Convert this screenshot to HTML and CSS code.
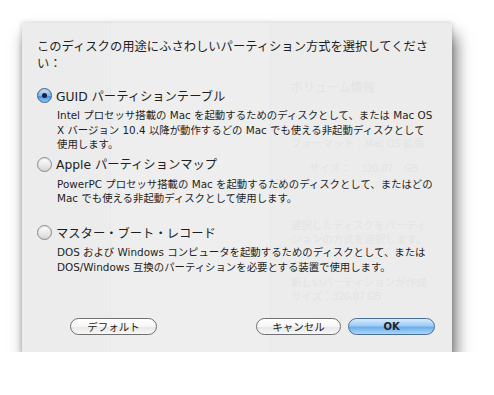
FILE: index.html
```html
<!DOCTYPE html>
<html>

<head>
  <meta name="viewport" content="width=device-width, initial-scale=1">
  <title>パーティション方式</title>
  <link rel="stylesheet" href="styles.css">
</head>

<body>
  <div class="sheet">
    <div class="ghost">
      <div class="ghost-col ghost-left"></div>
      <div class="ghost-col ghost-mid"></div>
      <div class="ghost-col ghost-right">
        <div class="ghost-title">ボリューム情報</div>
        <div class="ghost-row">フォーマット：Mac OS 拡張</div>
        <div class="ghost-row ghost-size">サイズ：　320.07　GB</div>
        <div class="ghost-para">選択したディスクをパーティ<br>ションの方式を選択します。</div>
        <div class="ghost-para ghost-last">新しいパーティションが作成<br>サイズ：320.07 GB</div>
      </div>
    </div>

    <div class="dialog">
      <p class="prompt">このディスクの用途にふさわしいパーティション方式を選択してくださ<br>い：</p>

      <div class="options">
        <div class="option">
          <label class="option-title"><span class="radio checked"></span>GUID パーティションテーブル</label>
          <p class="option-desc">Intel プロセッサ搭載の Mac を起動するためのディスクとして、または Mac OS<br>X バージョン 10.4 以降が動作するどの Mac でも使える非起動ディスクとして<br>使用します。</p>
        </div>

        <div class="option">
          <label class="option-title"><span class="radio"></span>Apple パーティションマップ</label>
          <p class="option-desc">PowerPC プロセッサ搭載の Mac を起動するためのディスクとして、またはどの<br>Mac でも使える非起動ディスクとして使用します。</p>
        </div>

        <div class="option">
          <label class="option-title"><span class="radio"></span>マスター・ブート・レコード</label>
          <p class="option-desc">DOS および Windows コンピュータを起動するためのディスクとして、または<br>DOS/Windows 互換のパーティションを必要とする装置で使用します。</p>
        </div>
      </div>

      <div class="buttons">
        <button class="btn">デフォルト</button>
        <span class="spacer"></span>
        <button class="btn btn-cancel">キャンセル</button>
        <button class="btn btn-ok">OK</button>
      </div>
    </div>
  </div>
</body>

</html>
```

FILE: styles.css
```css
body {
  margin: 0;
  background-color: #fff;
  font-family: "DejaVu Sans", "Noto Sans CJK JP", sans-serif;
  color: #1e1e1e;
}

.sheet {
  display: grid;
  grid-template-columns: minmax(0, 1fr);
  grid-template-rows: minmax(0, 1fr);
  width: 430px;
  height: 329px;
  margin: 23px 0 0 22px;
  background-color: #ececec;
  box-shadow: 4px 12px 15px rgba(0, 0, 0, 0.55), 0 0 5px rgba(0, 0, 0, 0.2);
}

/* faint window content behind the sheet */
.ghost {
  grid-area: 1 / 1;
  display: flex;
  min-width: 0;
  overflow: hidden;
  color: #e3e3e3;
  font-family: "Noto Sans CJK JP", sans-serif;
}

.ghost-col {
  height: 100%;
}

.ghost-left {
  width: 88px;
  flex: none;
  border-right: 1px solid #e5e8ed;
}

.ghost-mid {
  width: 159px;
  flex: none;
  border-right: 1px solid #e5e8ed;
  background-color: #eeeeee;
}

.ghost-right {
  flex: 1;
  min-width: 0;
  padding: 57px 0 0 20px;
  font-size: 10.5px;
  line-height: 14px;
  white-space: nowrap;
}

.ghost-title {
  font-size: 12px;
}

.ghost-row {
  margin-top: 42px;
}

.ghost-size {
  margin: 11px 0 0 18px;
}

.ghost-para {
  margin-top: 43px;
}

.ghost-last {
  margin-top: 29px;
}

.dialog {
  grid-area: 1 / 1;
  display: flex;
  flex-direction: column;
  min-width: 0;
  padding: 15px 17px 17px 15px;
}

.prompt {
  margin: 0;
  font-family: "Noto Sans CJK JP", sans-serif;
  font-size: 12.3px;
  line-height: 17px;
}

.options {
  margin-top: 14.5px;
}

.option {
  height: 68.5px;
}

.option-title {
  display: flex;
  align-items: center;
  gap: 4px;
  height: 18px;
  font-size: 12.3px;
}

.radio {
  width: 13px;
  height: 13px;
  border-radius: 50%;
  border: 1px solid #8a8a8a;
  background: linear-gradient(#ffffff, #e9e9e9 55%, #d4d4d4);
  box-shadow: inset 0 1px 1px rgba(0, 0, 0, 0.12);
  display: flex;
  align-items: center;
  justify-content: center;
  flex: none;
}

.radio.checked {
  border-color: #3f5f86;
  background: linear-gradient(#cfe6fb, #7fb7ee 50%, #3f8ee0 51%, #8cc6f6);
}

.radio.checked::after {
  content: "";
  width: 5px;
  height: 5px;
  border-radius: 50%;
  background-color: #1c2230;
}

.option-desc {
  margin: 3.5px 0 0 20px;
  font-size: 10.4px;
  line-height: 14.5px;
  white-space: nowrap;
}

.buttons {
  margin-top: auto;
  display: flex;
  align-items: center;
  gap: 7px;
  padding-left: 33px;
}

.spacer {
  flex: 1;
}

.btn {
  width: 87px;
  height: 17px;
  padding: 0;
  border: 1px solid #6f6f6f;
  border-radius: 9px;
  background: linear-gradient(#ffffff, #f6f6f6 50%, #e8e8e8 55%, #f7f7f7);
  font-family: "Noto Sans CJK JP", sans-serif;
  font-size: 10.5px;
  line-height: 15px;
  color: #222;
}

.btn-cancel {
  width: 85px;
}

.btn-ok {
  border-color: #4a6d98;
  background: linear-gradient(#d6ebfc, #9dccf5 45%, #6eaeec 55%, #a9d6f8);
  font-family: "DejaVu Sans", sans-serif;
  font-weight: bold;
  font-size: 10px;
}
```
